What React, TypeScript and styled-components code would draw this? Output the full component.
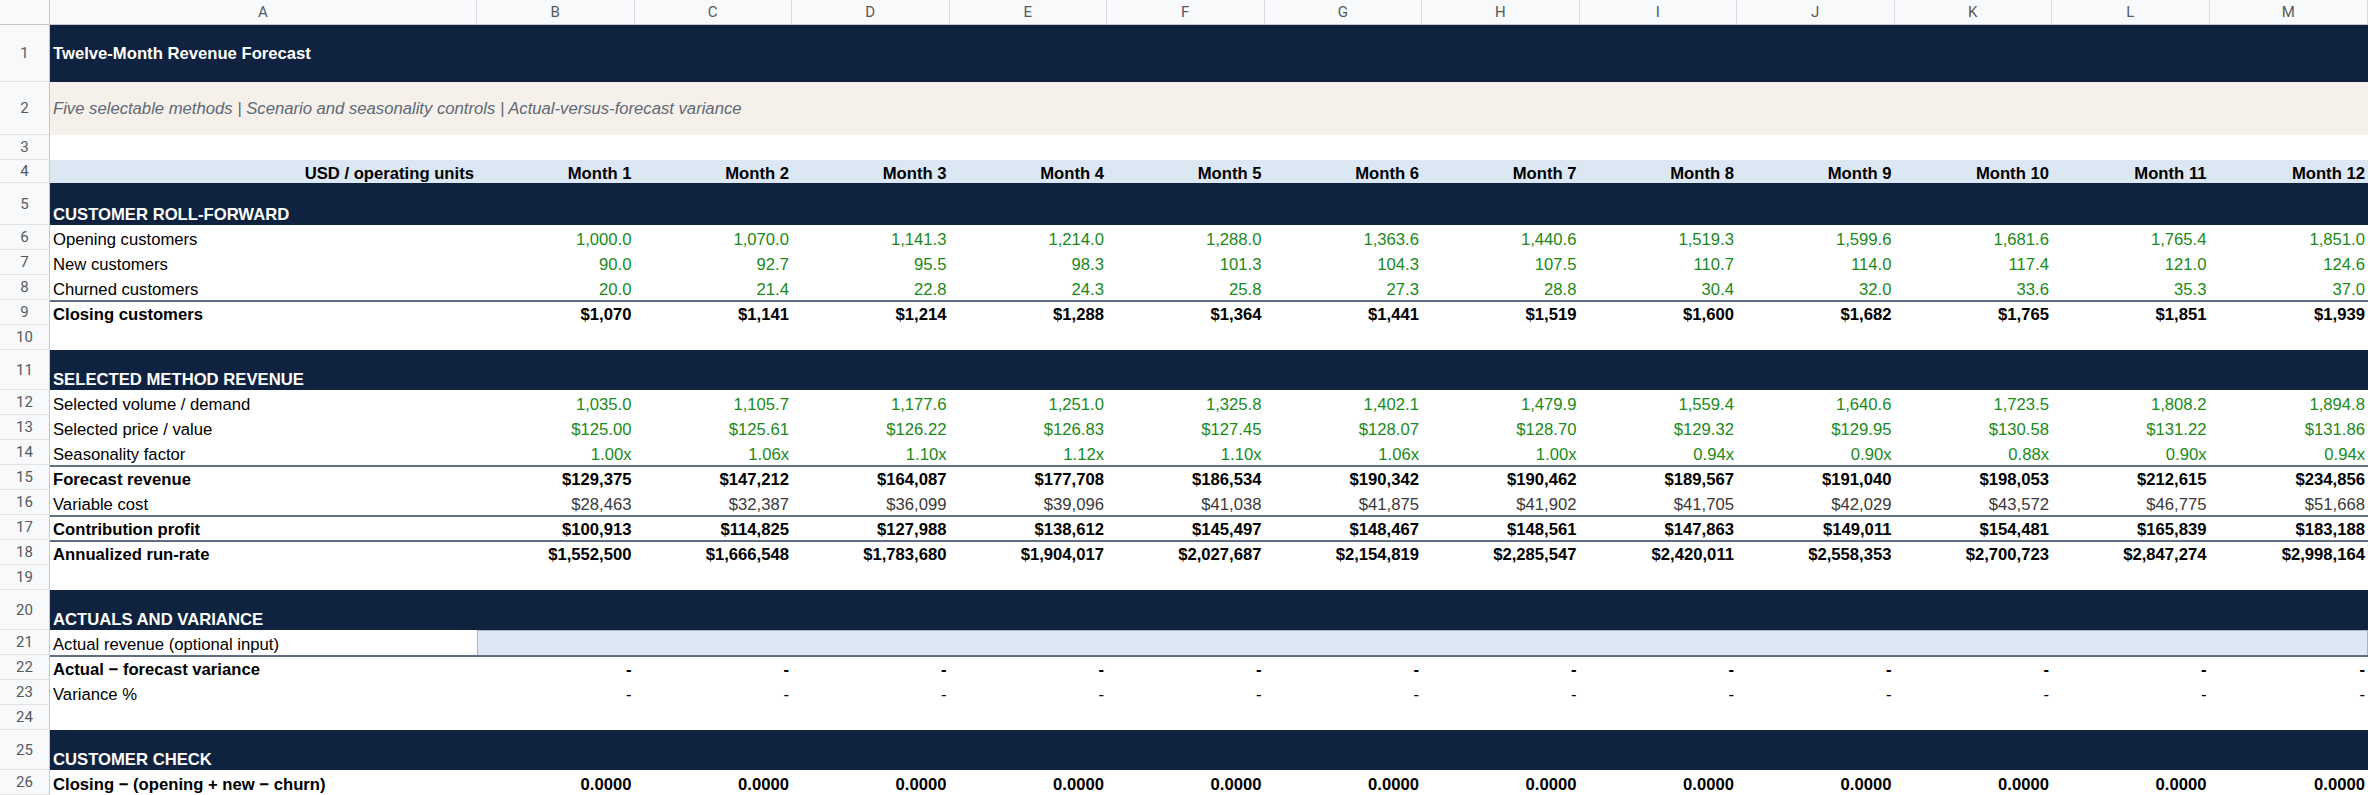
import React from 'react';
import styled, { createGlobalStyle, css } from 'styled-components';

const GlobalStyle = createGlobalStyle`
  html, body { margin: 0; padding: 0; background: #ffffff; }
  body { font-family: "Liberation Sans", Arial, sans-serif; overflow: hidden; }
`;

const NAVY = '#0f2340';
const GREEN = '#1a8a1a';
const RULE = '#5f6e82';
const FONT = '16.67px';
const GRID = '50px 427px repeat(11, 157.5px) 158.5px';

const Sheet = styled.div`
  width: 2368px;
  display: flex;
  flex-direction: column;
  overflow: hidden;
`;

const SheetRow = styled.div<{ $h: number }>`
  display: grid;
  grid-template-columns: ${GRID};
  height: ${(p) => p.$h}px;
`;

const HeaderBase = css`
  background: #f8f9fa;
  color: #555a60;
  font-family: Roboto, "Liberation Sans", Arial, sans-serif;
  font-size: 15px;
  display: flex;
  align-items: center;
  justify-content: center;
  box-sizing: border-box;
`;

const Corner = styled.div`
  ${HeaderBase};
  border-right: 1px solid #c4c7c5;
  border-bottom: 1px solid #c4c7c5;
`;

const ColLetter = styled.div`
  ${HeaderBase};
  border-right: 1px solid #dadce0;
  border-bottom: 1px solid #c4c7c5;
`;

const RowNumber = styled.div`
  ${HeaderBase};
  border-right: 1px solid #c4c7c5;
  border-bottom: 1px solid #e3e3e3;
`;

const Band = styled.div<{ $variant: 'title' | 'subtitle' | 'section' }>`
  grid-column: 2 / -1;
  display: flex;
  padding: 0 3px;
  box-sizing: border-box;
  font-size: ${FONT};
  line-height: 18px;
  white-space: nowrap;
  ${(p) =>
    p.$variant === 'title' &&
    css`
      background: ${NAVY};
      color: #ffffff;
      font-weight: 700;
      align-items: center;
    `}
  ${(p) =>
    p.$variant === 'subtitle' &&
    css`
      background: #f5f0e9;
      color: #5e6877;
      font-style: italic;
      align-items: center;
    `}
  ${(p) =>
    p.$variant === 'section' &&
    css`
      background: ${NAVY};
      color: #ffffff;
      font-weight: 700;
      align-items: flex-end;
      padding-bottom: 1px;
    `}
`;

const Blank = styled.div`
  grid-column: 2 / -1;
  background: #ffffff;
`;

type Tone = 'plain' | 'input' | 'muted' | 'head';

const Cell = styled.div<{ $align?: 'left' | 'right'; $bold?: boolean; $tone?: Tone; $rule?: boolean }>`
  display: flex;
  align-items: flex-end;
  justify-content: ${(p) => (p.$align === 'right' ? 'flex-end' : 'flex-start')};
  padding: 0 3px ${(p) => (p.$tone === 'head' ? 0 : 1)}px;
  box-sizing: border-box;
  font-size: ${FONT};
  line-height: 18px;
  white-space: nowrap;
  overflow: hidden;
  font-weight: ${(p) => (p.$bold ? 700 : 400)};
  color: ${(p) => (p.$tone === 'input' ? GREEN : p.$tone === 'muted' ? '#3a3a3a' : '#000000')};
  background: ${(p) => (p.$tone === 'head' ? '#dce7f4' : '#ffffff')};
  border-top: ${(p) => (p.$rule ? `2px solid ${RULE}` : 'none')};
`;

const InputBlock = styled.div`
  grid-column: 3 / -1;
  background: #dde8f5;
  border: 1px solid #a9b6c6;
  border-bottom: none;
  box-sizing: border-box;
`;

const columns = ['A', 'B', 'C', 'D', 'E', 'F', 'G', 'H', 'I', 'J', 'K', 'L', 'M'];

type DataRow = {
  label: string;
  values: string[];
  tone?: Tone;
  bold?: boolean;
  rule?: boolean;
};

type Spec =
  | { kind: 'title'; text: string; h: number }
  | { kind: 'subtitle'; text: string; h: number }
  | { kind: 'blank'; h: number }
  | { kind: 'head'; h: number }
  | { kind: 'section'; text: string; h: number }
  | { kind: 'input'; label: string; h: number }
  | ({ kind: 'data'; h: number } & DataRow);

const split = (s: string) => s.trim().split(/\s+/);
const repeat = (v: string) => Array.from({ length: 12 }, () => v);

const rows: Spec[] = [
  { kind: 'title', text: 'Twelve-Month Revenue Forecast', h: 57 },
  {
    kind: 'subtitle',
    text: 'Five selectable methods | Scenario and seasonality controls | Actual-versus-forecast variance',
    h: 53,
  },
  { kind: 'blank', h: 25 },
  { kind: 'head', h: 23 },
  { kind: 'section', text: 'CUSTOMER ROLL-FORWARD', h: 42 },
  {
    kind: 'data',
    h: 25,
    label: 'Opening customers',
    tone: 'input',
    values: split('1,000.0 1,070.0 1,141.3 1,214.0 1,288.0 1,363.6 1,440.6 1,519.3 1,599.6 1,681.6 1,765.4 1,851.0'),
  },
  {
    kind: 'data',
    h: 25,
    label: 'New customers',
    tone: 'input',
    values: split('90.0 92.7 95.5 98.3 101.3 104.3 107.5 110.7 114.0 117.4 121.0 124.6'),
  },
  {
    kind: 'data',
    h: 25,
    label: 'Churned customers',
    tone: 'input',
    values: split('20.0 21.4 22.8 24.3 25.8 27.3 28.8 30.4 32.0 33.6 35.3 37.0'),
  },
  {
    kind: 'data',
    h: 25,
    label: 'Closing customers',
    bold: true,
    rule: true,
    values: split('$1,070 $1,141 $1,214 $1,288 $1,364 $1,441 $1,519 $1,600 $1,682 $1,765 $1,851 $1,939'),
  },
  { kind: 'blank', h: 25 },
  { kind: 'section', text: 'SELECTED METHOD REVENUE', h: 40 },
  {
    kind: 'data',
    h: 25,
    label: 'Selected volume / demand',
    tone: 'input',
    values: split('1,035.0 1,105.7 1,177.6 1,251.0 1,325.8 1,402.1 1,479.9 1,559.4 1,640.6 1,723.5 1,808.2 1,894.8'),
  },
  {
    kind: 'data',
    h: 25,
    label: 'Selected price / value',
    tone: 'input',
    values: split('$125.00 $125.61 $126.22 $126.83 $127.45 $128.07 $128.70 $129.32 $129.95 $130.58 $131.22 $131.86'),
  },
  {
    kind: 'data',
    h: 25,
    label: 'Seasonality factor',
    tone: 'input',
    values: split('1.00x 1.06x 1.10x 1.12x 1.10x 1.06x 1.00x 0.94x 0.90x 0.88x 0.90x 0.94x'),
  },
  {
    kind: 'data',
    h: 25,
    label: 'Forecast revenue',
    bold: true,
    rule: true,
    values: split('$129,375 $147,212 $164,087 $177,708 $186,534 $190,342 $190,462 $189,567 $191,040 $198,053 $212,615 $234,856'),
  },
  {
    kind: 'data',
    h: 25,
    label: 'Variable cost',
    tone: 'muted',
    values: split('$28,463 $32,387 $36,099 $39,096 $41,038 $41,875 $41,902 $41,705 $42,029 $43,572 $46,775 $51,668'),
  },
  {
    kind: 'data',
    h: 25,
    label: 'Contribution profit',
    bold: true,
    rule: true,
    values: split('$100,913 $114,825 $127,988 $138,612 $145,497 $148,467 $148,561 $147,863 $149,011 $154,481 $165,839 $183,188'),
  },
  {
    kind: 'data',
    h: 25,
    label: 'Annualized run-rate',
    bold: true,
    rule: true,
    values: split(
      '$1,552,500 $1,666,548 $1,783,680 $1,904,017 $2,027,687 $2,154,819 $2,285,547 $2,420,011 $2,558,353 $2,700,723 $2,847,274 $2,998,164'
    ),
  },
  { kind: 'blank', h: 25 },
  { kind: 'section', text: 'ACTUALS AND VARIANCE', h: 40 },
  { kind: 'input', label: 'Actual revenue (optional input)', h: 25 },
  { kind: 'data', h: 25, label: 'Actual \u2212 forecast variance', bold: true, rule: true, values: repeat('-') },
  { kind: 'data', h: 25, label: 'Variance %', values: repeat('-') },
  { kind: 'blank', h: 25 },
  { kind: 'section', text: 'CUSTOMER CHECK', h: 40 },
  {
    kind: 'data',
    h: 25,
    label: 'Closing \u2212 (opening + new \u2212 churn)',
    bold: true,
    values: repeat('0.0000'),
  },
];

const months = Array.from({ length: 12 }, (_, i) => `Month ${i + 1}`);

function renderBody(spec: Spec) {
  switch (spec.kind) {
    case 'title':
      return <Band $variant="title">{spec.text}</Band>;
    case 'subtitle':
      return <Band $variant="subtitle">{spec.text}</Band>;
    case 'section':
      return <Band $variant="section">{spec.text}</Band>;
    case 'blank':
      return <Blank />;
    case 'head':
      return (
        <>
          <Cell $tone="head" $align="right" $bold>
            USD / operating units
          </Cell>
          {months.map((m) => (
            <Cell key={m} $tone="head" $align="right" $bold>
              {m}
            </Cell>
          ))}
        </>
      );
    case 'input':
      return (
        <>
          <Cell>{spec.label}</Cell>
          <InputBlock />
        </>
      );
    case 'data':
      return (
        <>
          <Cell $bold={spec.bold} $rule={spec.rule}>
            {spec.label}
          </Cell>
          {spec.values.map((v, i) => (
            <Cell key={i} $align="right" $bold={spec.bold} $rule={spec.rule} $tone={spec.tone}>
              {v}
            </Cell>
          ))}
        </>
      );
  }
}

export default function App() {
  return (
    <>
      <GlobalStyle />
      <Sheet>
        <SheetRow $h={25}>
          <Corner />
          {columns.map((c) => (
            <ColLetter key={c}>{c}</ColLetter>
          ))}
        </SheetRow>
        {rows.map((spec, i) => (
          <SheetRow key={i} $h={spec.h}>
            <RowNumber>{i + 1}</RowNumber>
            {renderBody(spec)}
          </SheetRow>
        ))}
      </Sheet>
    </>
  );
}
